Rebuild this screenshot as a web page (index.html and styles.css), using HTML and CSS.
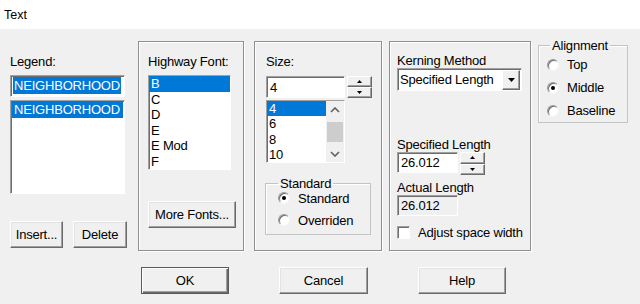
FILE: index.html
```html
<!DOCTYPE html>
<html>
<head>
<meta charset="utf-8">
<title>Text</title>
<link rel="stylesheet" href="styles.css">
</head>
<body>
<div class="titlebar">Text</div>
<div class="main">
  <div class="legend-col">
    <div class="lbl">Legend:</div>
    <div class="sunken legend-input"><span class="sel-text">NEIGHBORHOOD</span></div>
    <div class="sunken legend-list"><div class="item legend-item selected">NEIGHBORHOOD</div></div>
    <div class="btn-row">
      <div class="btn w-insert">Insert...</div>
      <div class="btn w-delete">Delete</div>
    </div>
  </div>

  <div class="panel hw">
    <div class="lbl">Highway Font:</div>
    <div class="sunken hw-list">
      <div class="item selected">B</div>
      <div class="item">C</div>
      <div class="item">D</div>
      <div class="item">E</div>
      <div class="item">E Mod</div>
      <div class="item">F</div>
    </div>
    <div class="btn w-more">More Fonts...</div>
  </div>

  <div class="panel size">
    <div class="lbl">Size:</div>
    <div class="spin-row">
      <div class="sunken size-input">4</div>
      <div class="spin">
        <div class="spin-btn"><svg width="5" height="3" viewBox="0 0 5 3"><path d="M2.5 0L5 3H0z" fill="#000"/></svg></div>
        <div class="spin-btn"><svg width="5" height="3" viewBox="0 0 5 3"><path d="M0 0H5L2.5 3z" fill="#000"/></svg></div>
      </div>
    </div>
    <div class="sunken size-list">
      <div class="size-items">
        <div class="item selected">4</div>
        <div class="item">6</div>
        <div class="item">8</div>
        <div class="item">10</div>
      </div>
      <div class="vscroll">
        <div class="sb-arrow"><svg width="10" height="6" viewBox="0 0 10 6"><polyline points="1,5 5,1 9,5" fill="none" stroke="#606060" stroke-width="1.6"/></svg></div>
        <div class="sb-thumb"></div>
        <div class="sb-space"></div>
        <div class="sb-arrow"><svg width="10" height="6" viewBox="0 0 10 6"><polyline points="1,1 5,5 9,1" fill="none" stroke="#606060" stroke-width="1.6"/></svg></div>
      </div>
    </div>
    <fieldset class="group std-group">
      <legend>Standard</legend>
      <div class="radio-row first"><span class="radio on"></span><span>Standard</span></div>
      <div class="radio-row"><span class="radio"></span><span>Overriden</span></div>
    </fieldset>
  </div>

  <div class="panel kern">
    <div class="lbl kern-lbl">Kerning Method</div>
    <div class="sunken combo">
      <span class="combo-text">Specified Length</span>
      <span class="combo-btn"><svg width="7" height="4" viewBox="0 0 7 4"><path d="M0 0H7L3.5 4z" fill="#000"/></svg></span>
    </div>
    <div class="lbl spec-lbl">Specified Length</div>
    <div class="spin-row">
      <div class="sunken len-input">26.012</div>
      <div class="spin tall">
        <div class="spin-btn"><svg width="5" height="3" viewBox="0 0 5 3"><path d="M2.5 0L5 3H0z" fill="#000"/></svg></div>
        <div class="spin-btn"><svg width="5" height="3" viewBox="0 0 5 3"><path d="M0 0H5L2.5 3z" fill="#000"/></svg></div>
      </div>
    </div>
    <div class="lbl actual-lbl">Actual Length</div>
    <div class="sunken len-input readonly">26.012</div>
    <div class="check-row"><span class="checkbox"></span><span class="check-label">Adjust space width</span></div>
  </div>

  <fieldset class="group align-group">
    <legend>Alignment</legend>
    <div class="radio-row"><span class="radio"></span><span>Top</span></div>
    <div class="radio-row"><span class="radio on"></span><span>Middle</span></div>
    <div class="radio-row"><span class="radio"></span><span>Baseline</span></div>
  </fieldset>
</div>

<div class="bottom-row">
  <div class="btn default w-ok">OK</div>
  <div class="btn w-cancel">Cancel</div>
  <div class="btn w-help">Help</div>
</div>
</body>
</html>
```

FILE: styles.css
```css
* { box-sizing: border-box; }
html, body { margin: 0; padding: 0; }
body {
  width: 640px;
  height: 304px;
  overflow: hidden;
  background: #f0f0f0;
  font-family: "Liberation Sans", Arial, sans-serif;
  font-size: 13px;
  letter-spacing: -0.2px;
  color: #000;
}
.titlebar {
  height: 29px;
  background: #fff;
  padding: 8px 0 0 4px;
  font-size: 12.5px;
  line-height: 15px;
  letter-spacing: 0;
}
.main {
  display: flex;
  align-items: flex-start;
  padding-top: 9px;
  height: 222px;
}
.lbl { height: 15px; line-height: 15px; white-space: nowrap; }

.sunken {
  background: #fff;
  border: 1px solid;
  border-color: #a0a0a0 #fff #fff #a0a0a0;
  box-shadow: inset 1px 1px 0 #6d6d6d;
}
.item { height: 15.6px; line-height: 15.6px; padding-left: 2px; white-space: nowrap; }
.item.selected { background: #0078d7; color: #fff; }

/* legend column */
.legend-col { width: 138px; padding-left: 10px; }
.legend-col .lbl { margin-top: 16px; }
.legend-input { margin-top: 6px; width: 115px; height: 22px; padding: 1px 0 0 2px; }
.sel-text { display: inline-block; background: #0078d7; color: #fff; line-height: 17px; padding: 0 1px; }
.legend-list { margin-top: 3px; width: 115px; height: 94px; padding-left: 1px; }
.legend-item { width: 111px; height: 17px; line-height: 17px; }
.btn-row { display: flex; gap: 10px; margin-top: 27px; }

/* buttons */
.btn {
  display: flex;
  align-items: center;
  justify-content: center;
  height: 27px;
  background: #f0f0f0;
  border: 1px solid;
  border-color: #fff #6a6a6a #6a6a6a #fff;
  box-shadow: inset -1px -1px 0 #a0a0a0, inset 1px 1px 0 #e3e3e3;
  white-space: nowrap;
}
.btn.default {
  border-color: #5a5a5a;
  box-shadow: inset 1px 1px 0 #fff, inset -1px -1px 0 #6a6a6a, inset -2px -2px 0 #a0a0a0;
}
.w-insert { width: 53px; }
.w-delete { width: 54px; }
.w-more { width: 88px; margin-top: 31px; }
.w-ok { width: 88px; }
.w-cancel { width: 89px; }
.w-help { width: 88px; }

/* panels */
.panel {
  margin-top: 3px;
  height: 210px;
  border: 1px solid #8f8f8f;
  box-shadow: inset 1px 1px 0 #fff, 1px 1px 0 #fff;
  padding-top: 12px;
}
.hw { width: 106px; padding-left: 9px; }
.hw-list { margin-top: 6px; width: 83px; height: 95px; overflow: hidden; }

.size { width: 128px; margin-left: 10px; padding-left: 11px; }
.spin-row { display: flex; align-items: flex-start; }
.size .spin-row { margin-top: 7px; }
.size-input { width: 79px; height: 22px; padding: 2px 0 0 3px; line-height: 17px; }
.spin { display: flex; flex-direction: column; width: 25px; height: 22px; margin-left: 2px; }
.spin.tall { height: 23px; }
.spin-btn {
  flex: 1;
  display: flex;
  align-items: center;
  justify-content: center;
  background: #f0f0f0;
  border: 1px solid;
  border-color: #fff #6a6a6a #6a6a6a #fff;
  box-shadow: inset -1px -1px 0 #a0a0a0;
}
.size-list { display: flex; margin-top: 2px; width: 79px; height: 63px; overflow: hidden; }
.size-items { flex: 1; padding-top: 0; }
.size-items .item { height: 15.3px; line-height: 15.3px; }
.vscroll { width: 18px; display: flex; flex-direction: column; background: #f0f0f0; }
.sb-arrow { height: 17px; display: flex; align-items: center; justify-content: center; }
.sb-thumb { height: 20px; margin: 4px 1px 0 1px; background: #cdcdcd; }
.sb-space { flex: 1; }

/* group boxes */
.group {
  margin: 0;
  border: 1px solid #c4c4c4;
  box-shadow: inset 1px 1px 0 #fff;
  min-width: 0;
}
.group legend { line-height: 15px; padding: 0 2px; }
.radio-row { display: flex; align-items: center; height: 22px; white-space: nowrap; }
.radio {
  width: 12px;
  height: 12px;
  border-radius: 50%;
  background: #fff;
  border: 1px solid;
  border-color: #9a9a9a #f4f4f4 #f4f4f4 #9a9a9a;
  box-shadow: inset 1px 1px 0 #6d6d6d;
  display: flex;
  align-items: center;
  justify-content: center;
  flex: none;
}
.radio.on::after {
  content: "";
  width: 4px;
  height: 4px;
  border-radius: 50%;
  background: #000;
}
.std-group {
  margin-top: 13px;
  margin-left: -1px;
  width: 106px;
  padding: 0 0 3px 12px;
}
.std-group .first { margin-top: -4px; }
.std-group .radio { margin-right: 8px; }

.align-group {
  margin-left: 7px;
  width: 90px;
  padding: 0 0 0 8px;
}
.align-group legend { margin-left: 3px; }
.align-group .radio-row { height: 23px; }
.align-group .radio { margin-right: 8px; }

/* kerning */
.kern { width: 142px; margin-left: 7px; padding-left: 7px; }
.kern-lbl { height: 14px; line-height: 14px; }
.combo { display: flex; align-items: center; width: 125px; height: 23px; padding: 0 1px 0 2px; }
.combo-text { flex: 1; white-space: nowrap; }
.combo-btn {
  width: 18px;
  height: 20px;
  display: flex;
  align-items: center;
  justify-content: center;
  background: #f0f0f0;
  border: 1px solid;
  border-color: #fff #6a6a6a #6a6a6a #fff;
  box-shadow: inset -1px -1px 0 #a0a0a0;
}
.spec-lbl { margin-top: 46px; }
.len-input { width: 61px; height: 21px; padding: 1px 0 0 3px; line-height: 17px; }
.len-input.readonly { background: #f0f0f0; }
.actual-lbl { margin-top: 5px; }
.check-row { display: flex; align-items: center; margin-top: 9px; height: 14px; white-space: nowrap; }
.checkbox {
  width: 13px;
  height: 13px;
  background: #fff;
  border: 1px solid;
  border-color: #a0a0a0 #fff #fff #a0a0a0;
  box-shadow: inset 1px 1px 0 #6d6d6d;
  flex: none;
}
.check-label { margin-left: 8px; }

/* bottom */
.bottom-row { display: flex; gap: 50px; padding-left: 141px; margin-top: 16px; }
```
